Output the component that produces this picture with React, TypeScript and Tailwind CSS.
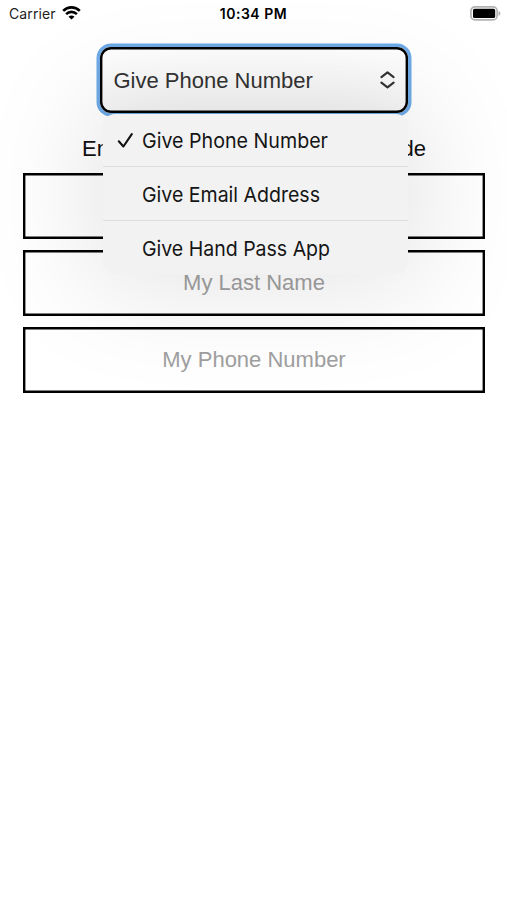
const options = [
  { label: 'Give Phone Number', width: 186, row: 'h-[53px] border-b border-[#dcdddd]' },
  { label: 'Give Email Address', width: 178, row: 'h-[54px] border-b border-[#dcdddd]' },
  { label: 'Give Hand Pass App', width: 188, row: 'h-[53px]' },
];

function StatusBar() {
  return (
    <header className="grid h-7 grid-cols-3 items-center pb-[2px] pl-[9px] pr-[6px] font-['Inter',sans-serif] text-black">
      <div className="flex items-center gap-[6px]">
        <span className="text-[14px] tracking-[0.12px] text-[#222]">Carrier</span>
        <svg width="19" height="14" viewBox="0 0 19 14" fill="none" stroke="#000" strokeWidth="2.6">
          <path d="M1.2 4.9C5.9.2 13.1.2 17.8 4.9" />
          <path d="M4.1 8.1C7.2 5.1 11.8 5.1 14.9 8.1" />
          <path d="M9.5 13.6 6.5 10.7C8.2 9.1 10.8 9.1 12.5 10.7Z" fill="#000" stroke="none" />
        </svg>
      </div>
      <span className="-ml-[3px] whitespace-nowrap text-center text-[14px] font-semibold tracking-[0.5px]">10:34 PM</span>
      <svg className="justify-self-end" width="31" height="15" viewBox="0 0 31 15">
        <rect x=".9" y=".9" width="26.2" height="13" rx="4" fill="#fff" stroke="#b2b2b2" strokeWidth="1.7" />
        <rect x="3" y="2.8" width="22.2" height="9.2" rx="1.6" fill="#000" />
        <path d="M28.5 5c2.5.8 2.5 4 0 4.8Z" fill="#aaa" />
      </svg>
    </header>
  );
}

function Field({ label }: { label?: string }) {
  return (
    <div className="flex h-[66px] items-center justify-center pb-[2px] text-[22px] text-[#a0a0a0] shadow-[inset_0_0_0_2.4px_#000]">
      {label}
    </div>
  );
}

function Menu() {
  return (
    <div className="absolute left-[3px] top-[67px] h-[160px] w-[305px] rounded-[12px] bg-[#f2f2f2] font-['Inter',sans-serif] text-[20.5px] shadow-[0_0_110px_18px_rgba(0,0,0,0.10)]">
      {options.map((option, i) => (
        <div key={option.label} className={'flex items-center pl-[14px] ' + option.row}>
          <span className="w-[25px]">
            {i === 0 && (
              <svg width="18" height="16" viewBox="0 0 18 16" fill="none" stroke="#111" strokeWidth="2.1" strokeLinecap="round" strokeLinejoin="round">
                <path d="M1.8 9.3 6.4 14.5 14.8 2.1" />
              </svg>
            )}
          </span>
          <svg className="h-[30px] overflow-visible" width={option.width}>
            <text x="0" y="22.5" fill="#151515" textLength={option.width} lengthAdjust="spacingAndGlyphs">
              {option.label}
            </text>
          </svg>
        </div>
      ))}
    </div>
  );
}

export default function App() {
  return (
    <div className="h-[900px] w-[507px] overflow-hidden bg-white font-['Liberation_Sans',sans-serif]">
      <StatusBar />
      <main className="flex flex-col pl-[23px] pr-[22px] pt-[19px]">
        <div className="relative z-10 ml-[76.5px] w-[308.5px]">
          <div className="flex h-[66px] items-center justify-between rounded-[11px] bg-gradient-to-b from-white to-[#f5f5f5] pl-[14px] pr-[13px] text-[22px] text-[#333] shadow-[inset_0_0_0_2.4px_#000,0_0_0_3.5px_#6eaae6]">
            <span>Give Phone Number</span>
            <svg width="15" height="18" viewBox="0 0 15 18" fill="none" stroke="#333" strokeWidth="2.1" strokeLinecap="round" strokeLinejoin="round">
              <path d="M1.4 6.1 7.5 1.4l6.1 4.7M1.4 11.7l6.1 4.7 6.1-4.7" />
            </svg>
          </div>
          <Menu />
        </div>
        <div className="mt-[20px] flex h-[30px] w-[344px] items-center justify-between self-center text-[22px] text-[#111]">
          <span>Enter</span>
          <span>Code</span>
        </div>
        <div className="mt-[10px] flex flex-col gap-[11px]">
          <Field />
          <Field label="My Last Name" />
          <Field label="My Phone Number" />
        </div>
      </main>
    </div>
  );
}
